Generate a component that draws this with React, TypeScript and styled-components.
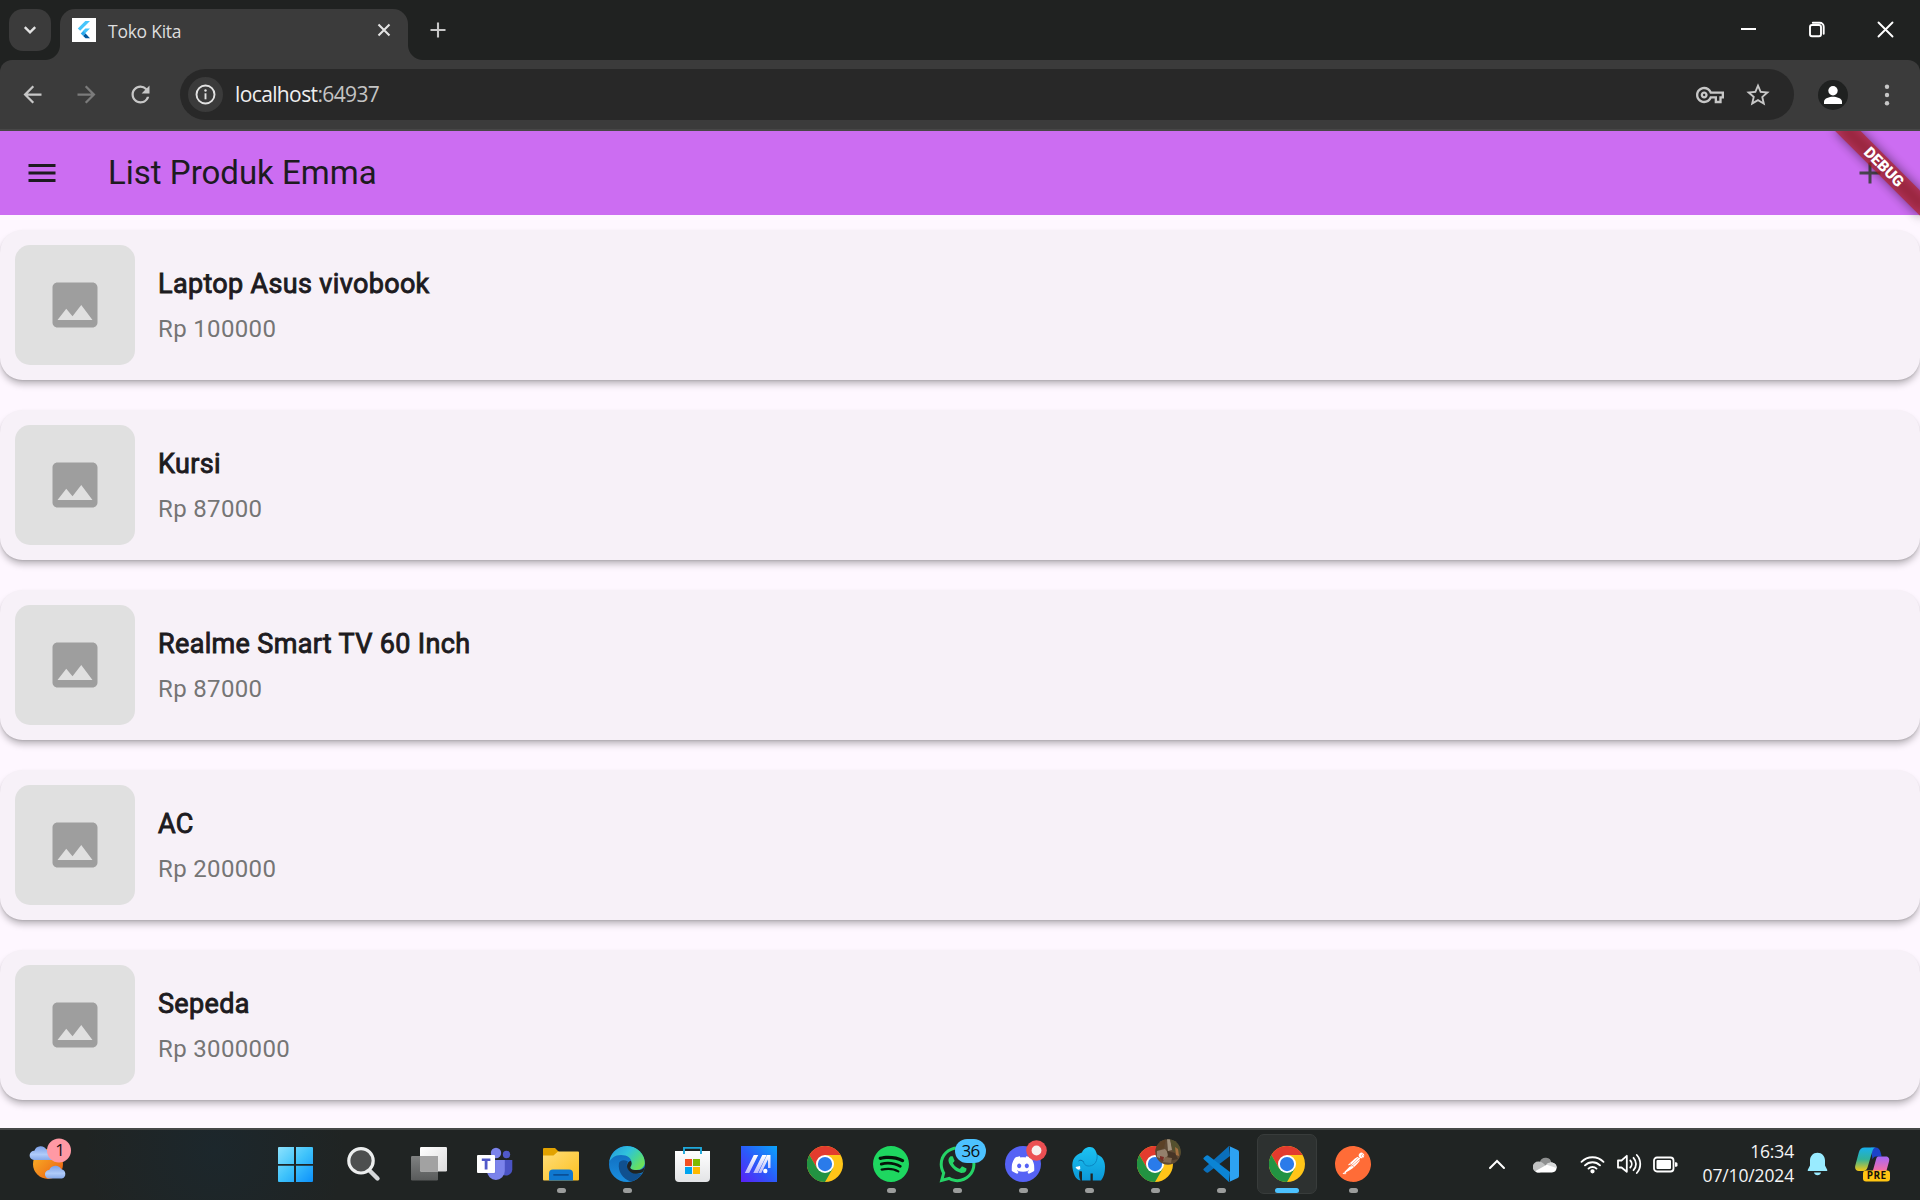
import React from "react";
import styled, { createGlobalStyle, css } from "styled-components";
import {
  MdArrowBack,
  MdArrowForward,
  MdRefresh,
  MdOutlineVpnKey,
  MdStarBorder,
  MdMenu,
  MdAdd,
  MdImage,
} from "react-icons/md";
import { SiSpotify, SiDiscord, SiPostman } from "react-icons/si";
import { FaWhatsapp } from "react-icons/fa";

const uiFont = '"Open Sans", "Noto Sans", sans-serif';

const GlobalStyle = createGlobalStyle`
  *, *::before, *::after { box-sizing: border-box; }
  html, body { margin: 0; padding: 0; background: #202221; overflow: hidden; }
  svg { display: block; flex: none; }
`;

const Screen = styled.div`
  width: 1920px;
  height: 1200px;
  display: flex;
  flex-direction: column;
  overflow: hidden;
  font-family: Roboto, sans-serif;
`;

/* ---------- Browser chrome ---------- */

const TabStrip = styled.header`
  flex: none;
  height: 60px;
  display: flex;
  align-items: flex-start;
  padding: 9px 0 0 9px;
  background: #202221;
`;

const TabSearchButton = styled.div`
  width: 42px;
  height: 42px;
  display: grid;
  place-items: center;
  border-radius: 14px;
  background: #3b3b3b;
`;

const Tab = styled.div`
  position: relative;
  width: 348px;
  height: 51px;
  margin-left: 9px;
  padding: 9px 0 0 12px;
  display: flex;
  align-items: flex-start;
  background: #3b3b3b;
  border-radius: 15px 15px 0 0;

  &::before,
  &::after {
    content: "";
    position: absolute;
    bottom: 0;
    width: 15px;
    height: 15px;
  }
  &::before {
    left: -15px;
    background: radial-gradient(circle at 0 0, transparent 14.5px, #3b3b3b 15.5px);
  }
  &::after {
    right: -15px;
    background: radial-gradient(circle at 100% 0, transparent 14.5px, #3b3b3b 15.5px);
  }
`;

const TabTitle = styled.span`
  flex: 1;
  margin-left: 12px;
  font: 400 17.5px/26px ${uiFont};
  letter-spacing: -0.25px;
  color: #dedede;
`;

const TabClose = styled.span`
  margin: 5px 17px 0 0;
`;

const NewTab = styled.div`
  margin: 13px 0 0 22px;
`;

const WindowButtons = styled.div`
  margin-left: auto;
  display: flex;
  height: 40px;
`;

const WindowButton = styled.div`
  width: 68.5px;
  display: flex;
  justify-content: center;
  padding-top: 12px;
`;

const ToolbarBack = styled.div`
  flex: none;
  background: #202221;
`;

const Toolbar = styled.div`
  height: 71px;
  display: flex;
  align-items: center;
  padding: 0 20px 0 19px;
  background: #3b3b3b;
  border-bottom: 2px solid #474747;
  border-radius: 12px 12px 0 0;
`;

const NavButton = styled.div<{ $dim?: boolean }>`
  width: 27px;
  margin-right: 27px;
  color: ${(p) => (p.$dim ? "#7b7b7b" : "#c7c7c7")};
`;

const AddressBar = styled.div`
  width: 1614px;
  height: 51px;
  margin-left: -1px;
  display: flex;
  align-items: center;
  padding: 0 22px 0 8px;
  border-radius: 26px;
  background: #282828;
  color: #c7c7c7;
`;

const SiteInfo = styled.div`
  width: 35px;
  height: 35px;
  display: grid;
  place-items: center;
  border-radius: 50%;
  background: #3b3b3b;
`;

const Url = styled.div`
  flex: 1;
  margin-left: 12px;
  padding-bottom: 1px;
  font: 400 21px/30px ${uiFont};
  letter-spacing: -0.62px;
  color: #c4c4c4;

  b {
    font-weight: 400;
    color: #efefef;
  }
`;

const AddressActions = styled.div`
  display: flex;
  align-items: center;
  gap: 20px;
`;

const Avatar = styled.div`
  width: 30px;
  height: 30px;
  margin-left: 24px;
  border-radius: 50%;
  background: #1f2120;
`;

const MoreMenu = styled.div`
  margin-left: auto;
  width: 26px;
  display: grid;
  place-items: center;
`;

/* ---------- Page ---------- */

const Page = styled.main`
  position: relative;
  flex: 1;
  display: flex;
  flex-direction: column;
  overflow: hidden;
  background: #fef7ff;
`;

const AppBar = styled.div`
  flex: none;
  height: 84px;
  display: flex;
  align-items: center;
  padding: 0 32px 0 24px;
  background: #cc6df2;
`;

const AppTitle = styled.h1`
  flex: 1;
  margin: 0 0 0 48px;
  font: 400 33px/42px Roboto, sans-serif;
  color: #1d1b20;
`;

const Ribbon = styled.div`
  position: absolute;
  top: 0;
  left: 100%;
  width: 120px;
  height: 18px;
  transform-origin: 0 0;
  transform: rotate(45deg) translate(-60px, 42px);

  &::before {
    content: "";
    position: absolute;
    inset: 0;
    background: rgba(0, 0, 0, 0.5);
    filter: blur(5.5px);
  }

  span {
    position: relative;
    display: block;
    background: rgba(183, 28, 28, 0.63);
    color: #fff;
    font: 900 15.3px/18px Roboto, sans-serif;
    text-align: center;
  }
`;

const ProductList = styled.ul`
  margin: 0;
  padding: 15px 0;
  list-style: none;
  display: flex;
  flex-direction: column;
  gap: 30px;
`;

const Card = styled.li`
  height: 150px;
  display: flex;
  align-items: center;
  padding: 15px;
  gap: 23px;
  border-radius: 22.5px;
  background: #f7f1f8;
  box-shadow: 0 5px 7px -1px rgba(0, 0, 0, 0.27), 0 1px 2px rgba(0, 0, 0, 0.1);
`;

const Thumb = styled.div`
  width: 120px;
  height: 120px;
  display: grid;
  place-items: center;
  border-radius: 15px;
  background: #e0e0e0;
  color: #9e9e9e;
`;

const ProductText = styled.div`
  padding-top: 2px;
`;

const ProductName = styled.div`
  font: 400 27px/36px Roboto, sans-serif;
  letter-spacing: 0.34px;
  -webkit-text-stroke: 0.9px #1d1b20;
  color: #1d1b20;
`;

const Price = styled.div`
  margin-top: 10px;
  font: 400 24px/34px Roboto, sans-serif;
  letter-spacing: 0.34px;
  color: #757575;
`;

/* ---------- Taskbar ---------- */

const Taskbar = styled.footer`
  flex: none;
  height: 72px;
  display: flex;
  align-items: stretch;
  border-top: 2px solid #474749;
  background: radial-gradient(circle at 215px 20px, #1c272c 0, rgba(32, 36, 35, 0) 130px), #202423;
`;

const Widgets = styled.div`
  width: 264px;
  padding: 7px 0 0 29px;
`;

const Slot = styled.div<{ $active?: boolean }>`
  position: relative;
  width: 66px;
  display: flex;
  flex-direction: column;
  align-items: center;
  padding-top: 16px;

  ${(p) =>
    p.$active &&
    css`
      &::before {
        content: "";
        position: absolute;
        left: 3px;
        top: 4px;
        width: 60px;
        height: 60px;
        border: 1.5px solid #383c3b;
        border-radius: 7px;
        background: #2d3130;
      }
    `}
`;

const IconBox = styled.div`
  position: relative;
  width: 36px;
  height: 36px;
  display: flex;
  align-items: center;
  justify-content: center;
`;

const RunMark = styled.i<{ $active?: boolean }>`
  position: relative;
  width: ${(p) => (p.$active ? 24 : 9)}px;
  height: 5px;
  margin-top: 6px;
  border-radius: 3px;
  background: ${(p) => (p.$active ? "#4cc2ff" : "#9b9d9c")};
`;

const CountBadge = styled.span`
  position: absolute;
  left: 16px;
  top: -7px;
  width: 31px;
  height: 24px;
  border-radius: 12px;
  background: #4cc2ff;
  color: #0c1114;
  font: 400 17px/24px ${uiFont};
  letter-spacing: -0.6px;
  text-align: center;
`;

const Overlay = styled.span`
  position: absolute;
  left: 18px;
  top: -7px;
`;

const Tray = styled.div`
  margin-left: auto;
  display: flex;
  align-items: center;
  padding: 0 30px 2px 0;
`;

const TrayItem = styled.div<{ $gap: number }>`
  margin-left: ${(p) => p.$gap}px;
`;

const Clock = styled.div`
  width: 112px;
  margin-left: 4px;
  padding-bottom: 3px;
  font: 400 17.5px/24px ${uiFont};
  letter-spacing: -0.15px;
  text-align: right;
  color: #f4f5f5;
  white-space: nowrap;
`;

/* ---------- Drawings ---------- */

const FlutterIcon = () => (
  <svg width="24" height="24" viewBox="0 0 24 24">
    <rect width="24" height="24" fill="#fff" />
    <path d="M13.3 3H18L8.2 12.8 5.8 10.5z" fill="#47c5fb" />
    <path d="M13.3 10.6H18l-5 5-2.4-2.4z" fill="#47c5fb" />
    <path d="M8.7 15.5l2.5-2.4 2.4 2.4-2.4 2.4z" fill="#2aa9ee" />
    <path d="M11.2 17.9l2.4-2.4L18 20.3h-4.5z" fill="#00569e" />
  </svg>
);

const WeatherIcon = () => (
  <svg width="44" height="46" viewBox="0 0 44 46">
    <defs>
      <linearGradient id="sun" x1="0" y1="0" x2="1" y2="1">
        <stop offset="0" stopColor="#fbb929" />
        <stop offset="1" stopColor="#ea5a10" />
      </linearGradient>
      <linearGradient id="cloudBlue" x1="0" y1="0" x2="0" y2="1">
        <stop offset="0" stopColor="#7b9fe6" />
        <stop offset=".6" stopColor="#afcbfa" />
        <stop offset="1" stopColor="#86a9ea" />
      </linearGradient>
    </defs>
    <circle cx="19" cy="27" r="15" fill="url(#sun)" />
    <path d="M5 23a4.6 4.6 0 0 1 .4-9.200A6.500 6.500 0 0 1 17.500 13 5 5 0 0 1 23 23z" fill="url(#cloudBlue)" />
    <path d="M20 41.500a4.200 4.200 0 0 1 .3-8.400 6.500 6.500 0 0 1 12-.8 4.700 4.700 0 0 1 .5 9.200z" fill="url(#cloudBlue)" />
    <circle cx="30" cy="13.500" r="12" fill="#ff99a4" />
    <text x="31" y="19" fontSize="17" textAnchor="middle" fill="#1b1012" fontFamily="Open Sans, sans-serif">1</text>
  </svg>
);

const StartIcon = () => (
  <svg width="36" height="36" viewBox="3 0 36 36" overflow="visible">
    <defs>
      <linearGradient id="win" gradientUnits="userSpaceOnUse" x1="0" y1="0" x2="36" y2="36">
        <stop offset="0" stopColor="#8fe3fd" />
        <stop offset=".5" stopColor="#3fc3fb" />
        <stop offset="1" stopColor="#0a8ffb" />
      </linearGradient>
    </defs>
    <g fill="url(#win)" transform="translate(1 1)">
      <path d="M2 0h15v17H1V1a1 1 0 0 1 1-1zM19 0h16a1 1 0 0 1 1 1V17H19zM1 18.800h16V35H2a1 1 0 0 1-1-1zM19 18.800h17v15.200a1 1 0 0 1-1 1H19z" />
    </g>
  </svg>
);

const SearchIcon = () => (
  <svg width="36" height="36" viewBox="0 0 36 36">
    <path d="M25 25l7.500 7.500" stroke="#d5d8da" strokeWidth="4.400" strokeLinecap="round" />
    <circle cx="16" cy="14.800" r="12.200" fill="#4d4f4f" stroke="#eceeee" strokeWidth="3.200" />
  </svg>
);

const TaskViewIcon = () => (
  <svg width="36" height="36" viewBox="0 0 36 36">
    <defs>
      <linearGradient id="tvLight" x1="0" y1="0" x2="1" y2="1">
        <stop offset="0" stopColor="#fff" />
        <stop offset="1" stopColor="#dcdcdc" />
      </linearGradient>
      <linearGradient id="tvDark" x1="0" y1="0" x2="0" y2="1">
        <stop offset="0" stopColor="#7f8181" />
        <stop offset="1" stopColor="#595b5b" />
      </linearGradient>
    </defs>
    <rect x="0" y="10" width="27" height="24.500" rx="1.200" fill="url(#tvDark)" />
    <rect x="9" y="1" width="27" height="24.500" rx="1.200" fill="url(#tvLight)" />
    <path d="M9 10h18v15.500H10.200A1.200 1.200 0 0 1 9 24.300z" fill="#a2a2a2" />
  </svg>
);

const TeamsIcon = () => (
  <svg width="36" height="36" viewBox="0 0 36 36">
    <circle cx="29.500" cy="8.500" r="3.700" fill="#5059c9" />
    <path d="M25 14h10.300v9.500a6.300 6.300 0 0 1-10.300 4.500z" fill="#4a53c4" />
    <circle cx="19" cy="7" r="5.200" fill="#7b83eb" />
    <path d="M10 14h17.800v11a8.900 8.900 0 0 1-17.800 0z" fill="#7b83eb" />
    <path d="M11 27.500h7.500V12H11z" fill="#4f56b5" opacity=".25" />
    <rect x="0" y="9" width="18" height="18" rx="1" fill="#fff" />
    <path d="M4.800 12.500h8.600v2.500h-2.900v8.500H7.700V15H4.800z" fill="#5059c9" />
  </svg>
);

const FolderIcon = () => (
  <svg width="36" height="36" viewBox="0 0 36 36">
    <defs>
      <linearGradient id="folder" x1="0" y1="0" x2="1" y2="1">
        <stop offset="0" stopColor="#ffdd78" />
        <stop offset="1" stopColor="#fcc020" />
      </linearGradient>
    </defs>
    <path d="M1 2h11l3.500 3.500V12H0V3a1 1 0 0 1 1-1z" fill="#e2a200" />
    <path d="M0 9.500h10.500L15 5.500h20a1 1 0 0 1 1 1v27a1 1 0 0 1-1 1H1a1 1 0 0 1-1-1z" fill="url(#folder)" />
    <path d="M6 34.500V27.500a4 4 0 0 1 4-4h16a4 4 0 0 1 4 4v7z" fill="#0f78d0" />
    <path d="M11 28.800h14" stroke="#0a4f96" strokeWidth="1.800" strokeLinecap="round" />
  </svg>
);

const EdgeIcon = () => (
  <svg width="36" height="36" viewBox="0 0 36 36">
    <defs>
      <linearGradient id="edgeTop" x1="0" y1="0" x2="1" y2=".6">
        <stop offset="0" stopColor="#2496dc" />
        <stop offset=".5" stopColor="#30c2dc" />
        <stop offset=".75" stopColor="#45d49b" />
        <stop offset="1" stopColor="#6be05c" />
      </linearGradient>
      <linearGradient id="edgeLeft" x1="0" y1="0" x2="0" y2="1">
        <stop offset="0" stopColor="#0f66b8" />
        <stop offset="1" stopColor="#1a8fe0" />
      </linearGradient>
      <clipPath id="edgeDisc">
        <circle cx="18" cy="18" r="18" />
      </clipPath>
    </defs>
    <g clipPath="url(#edgeDisc)">
      <rect width="36" height="36" fill="url(#edgeLeft)" />
      <path d="M10 17c-1.500 9 4 15.500 11.500 18.600L36 36V26.500C30 29.500 20 27.500 18 20.500c-.5-2 .2-4 1-5C15 13.500 11.500 14 10 17z" fill="#10508f" />
      <path d="M37 18c-1.500 4.500-5 6.100-9 6-3.500 0-6.500-1-6.500-2.500 0-1.200 1.300-1.800 1.300-4 0-1-.3-2-1-2.800-3 1-4.300 4-3.600 7C20 27.500 28.500 29.500 34 26l3-1z" fill="#202423" />
      <path d="M0 17C1 7 8.500 0 18 0c10 0 18 7.500 18 15.500 0 5.500-4 8.500-8.500 8.500-4 0-6.500-1.200-6-2.800.3-1 1.300-1.700 1.300-4C22.800 12.500 18.500 9 12 9 6 9 1.500 12.500 0 17z" fill="url(#edgeTop)" />
    </g>
  </svg>
);

const StoreIcon = () => (
  <svg width="36" height="36" viewBox="0 0 36 36">
    <defs>
      <linearGradient id="bag" x1="0" y1="0" x2="0" y2="1">
        <stop offset="0" stopColor="#fff" />
        <stop offset="1" stopColor="#e3e4e6" />
      </linearGradient>
    </defs>
    <path d="M0 5h35v27a4 4 0 0 1-4 4H4a4 4 0 0 1-4-4z" fill="url(#bag)" />
    <path d="M9 8V1.900h17V8" fill="none" stroke="#1fa9dc" strokeWidth="1.900" />
    <path d="M10 13h7v7h-7z" fill="#f25022" />
    <path d="M18 13h7v7h-7z" fill="#7fba00" />
    <path d="M10 21h7v7h-7z" fill="#00a4ef" />
    <path d="M18 21h7v7h-7z" fill="#ffb900" />
  </svg>
);

const MyAsusIcon = () => (
  <svg width="36" height="36" viewBox="0 0 36 36">
    <defs>
      <linearGradient id="asus" x1="0" y1="1" x2="1" y2="0">
        <stop offset="0" stopColor="#5a20f5" />
        <stop offset=".5" stopColor="#2a5cfa" />
        <stop offset="1" stopColor="#0aa5fa" />
      </linearGradient>
      <linearGradient id="stroke" x1="0" y1="0" x2="0" y2="1">
        <stop offset="0" stopColor="#fff" />
        <stop offset="1" stopColor="#b9b8fb" />
      </linearGradient>
    </defs>
    <rect width="36" height="36" fill="url(#asus)" />
    <path d="M12.800 9h4.400L8.200 27H3.800zM21.300 9h4.400L16.700 27h-4.400z" fill="url(#stroke)" />
    <path d="M26 9h3.500v13h-2.500v-8.500L20.300 27h-3z" fill="url(#stroke)" />
    <circle cx="24.300" cy="25" r="2.200" fill="#fff" />
  </svg>
);

const ChromeIcon = () => (
  <svg width="36" height="36" viewBox="0 0 48 48">
    <circle cx="24" cy="24" r="24" fill="#ffc518" />
    <path d="M24 12h20.800A24 24 0 0 0 3.200 12L13.600 30z" fill="#e33b2e" />
    <path d="M34.400 30 24 48A24 24 0 0 1 3.200 12l10.400 18z" fill="#229342" />
    <circle cx="24" cy="24" r="12" fill="#fff" />
    <circle cx="24" cy="24" r="9.500" fill="#2a7bea" />
  </svg>
);

const SpotifyIcon = () => (
  <svg width="36" height="36" viewBox="0 0 36 36">
    <circle cx="18" cy="18" r="16" fill="#06140a" />
    <SiSpotify x="0" y="0" size={36} color="#1ed760" />
  </svg>
);

const DiscordIcon = () => (
  <svg width="36" height="36" viewBox="0 0 36 36">
    <circle cx="18" cy="18" r="18" fill="#5562f5" />
    <SiDiscord x="6.500" y="7.500" size={23} color="#fff" />
  </svg>
);

const RecordDot = () => (
  <svg width="21" height="21" viewBox="0 0 21 21">
    <circle cx="10.500" cy="10.500" r="10.300" fill="#eb4f52" />
    <circle cx="10.500" cy="10.500" r="4.900" fill="#f6efef" />
  </svg>
);

const ElephantIcon = () => (
  <svg width="36" height="36" viewBox="0 0 36 36">
    <defs>
      <linearGradient id="eleph" x1="0" y1="0" x2="0" y2="1">
        <stop offset="0" stopColor="#1cc3f2" />
        <stop offset="1" stopColor="#0b98d8" />
      </linearGradient>
    </defs>
    <path d="M1.500 22C.5 14 4 8.500 11 6.500 12.500 2.500 16 1 19 1c4 0 6 3.500 7 7.500 5 1.500 8 6 8 12 0 7-1.500 11-4 14h-8.200v-7h-2.300v7H11V25.500L8.500 25C7.800 28.500 8 31.500 9.500 34.500 4.500 33.500 2.500 28 1.500 22z" fill="url(#eleph)" />
    <path d="M26 8.500c.8 6-2 11-7.500 11.500-4 .3-6-2-6-5" fill="none" stroke="#0a87c2" strokeWidth="1" />
    <path d="M7.500 15c1.500-1.200 3.500-1 4.500.5" fill="none" stroke="#0b6fa4" strokeWidth="1" />
    <path d="M4.500 21l4.500-1 .3 3c-1.500 1.500-3.500.5-4.800-2z" fill="#fff" />
  </svg>
);

const ProfilePhoto = () => (
  <svg width="26" height="26" viewBox="0 0 26 26">
    <defs>
      <clipPath id="photoClip">
        <circle cx="13" cy="13" r="12.700" />
      </clipPath>
      <filter id="photoSoft">
        <feGaussianBlur stdDeviation="0.7" />
      </filter>
    </defs>
    <g clipPath="url(#photoClip)">
      <rect width="26" height="26" fill="#5f4a34" />
      <g filter="url(#photoSoft)">
        <path d="M0 0h11l-2 9-9 4z" fill="#5c4226" />
        <path d="M12 0h3l2 11-4 1z" fill="#a3947f" />
        <path d="M15 0h11v16l-8-4z" fill="#55512f" />
        <path d="M2 12l8-2 4 5-5 6-7-3z" fill="#94806c" />
        <path d="M12 12l8 2 3 6-9 2z" fill="#463626" />
        <path d="M10 18l7 1-1 5-8-1z" fill="#80674f" />
        <path d="M20 8l3 2 1 7-3-1z" fill="#a5713f" />
        <path d="M5 17l4 1-1 4-3-2z" fill="#7d2e27" />
      </g>
    </g>
  </svg>
);

const CodeIcon = () => (
  <svg width="36" height="36" viewBox="0 0 36 36">
    <path d="M26 0 1 22.500a1.300 1.300 0 0 0 0 2l2 1.800a1.800 1.800 0 0 0 2.200.1L27 10z" fill="#0a6fbb" />
    <path d="M26 36 1 13.500a1.300 1.300 0 0 1 0-2l2-1.800a1.800 1.800 0 0 1 2.200-.1L27 26z" fill="#0b84d4" />
    <path d="M26 0l8.700 4A2.200 2.200 0 0 1 36 6v24a2.200 2.200 0 0 1-1.300 2L26 36c.8-.5 1-1 1-2V2c0-1-.2-1.500-1-2z" fill="#2da2f2" />
  </svg>
);

const PostmanIcon = () => (
  <svg width="36" height="36" viewBox="0 0 36 36">
    <circle cx="18" cy="18" r="17" fill="#fff" />
    <SiPostman x="0" y="0" size={36} color="#ff6c37" />
  </svg>
);

const CloudIcon = () => (
  <svg width="24" height="17" viewBox="0 0 24 17">
    <path d="M7 5.500a6 6 0 0 1 11.500 1.500L12 11z" fill="#8e9090" />
    <path d="M5 16.500a5.400 5.400 0 0 1 .5-11c3 0 6 2 8 5.500L7 16.500z" fill="#c0c2c2" />
    <path d="M2.500 15 15 8c1.500-1.500 3.500-2 5-1.300A5 5 0 0 1 19 16.500H5c-1 0-2-.5-2.500-1.500z" fill="#fff" />
    <path d="M13 8.500c2-2.500 7-3 9.500.5.800 1.200 1 2 1 3z" fill="#d8dada" />
  </svg>
);

const WifiIcon = () => (
  <svg width="25" height="20" viewBox="0 0 25 20" fill="none" stroke="#fff" strokeWidth="1.900" strokeLinecap="round">
    <path d="M1.500 7.800a15.500 15.500 0 0 1 22 0M5 11.300a10.600 10.600 0 0 1 15 0M8.500 14.600a5.700 5.700 0 0 1 8 0" />
    <circle cx="12.500" cy="17.300" r="1.200" fill="#fff" />
  </svg>
);

const SpeakerIcon = () => (
  <svg width="25" height="22" viewBox="0 0 25 22" fill="none" stroke="#fff" strokeWidth="1.800" strokeLinecap="round" strokeLinejoin="round">
    <path d="M1 7.500h3.500L9.800 2.800v16L4.500 14.500H1z" />
    <path d="M13.300 7.500a5 5 0 0 1 0 7M16.500 4.800a9 9 0 0 1 0 12.400M19.800 2a13.500 13.500 0 0 1 0 18" />
  </svg>
);

const BatteryIcon = () => (
  <svg width="25" height="17" viewBox="0 0 25 17">
    <rect x="1" y="1.500" width="19.500" height="14" rx="3" fill="none" stroke="#fff" strokeWidth="1.800" />
    <rect x="3.500" y="4" width="14.500" height="9" rx="1" fill="#fff" />
    <path d="M22 6.200h1a1.500 1.500 0 0 1 1.500 1.500v1.600A1.500 1.500 0 0 1 23 10.800h-1z" fill="#fff" />
  </svg>
);

const BellIcon = () => (
  <svg width="21" height="24" viewBox="0 0 21 24">
    <path d="M10.500.8c4.500 0 7.500 3.500 7.500 7.700v5l2.200 4.200c.3.700 0 1.300-.8 1.300H1.600c-.8 0-1.100-.6-.8-1.300L3 13.500v-5C3 4.300 6 .8 10.500.8z" fill="#99ebff" />
    <path d="M7 20.500h7a3.600 3.600 0 0 1-7 0z" fill="#99ebff" />
  </svg>
);

const CopilotIcon = () => (
  <svg width="35" height="35" viewBox="0 0 35 35">
    <defs>
      <linearGradient id="copA" x1="0" y1="0" x2="0" y2="1">
        <stop offset="0" stopColor="#18b0ee" />
        <stop offset=".5" stopColor="#31b29a" />
        <stop offset="1" stopColor="#f5c714" />
      </linearGradient>
      <linearGradient id="copB" x1="0" y1="0" x2="0" y2="1">
        <stop offset="0" stopColor="#a668f8" />
        <stop offset="1" stopColor="#ff6f9a" />
      </linearGradient>
    </defs>
    <path d="M16 .5h4.500C23.500.5 24.500 2 25.500 5l1.200 4.500H21c-2 0-3 1.500-3.500 3z" fill="#1c43c8" />
    <path d="M9.500.5H21c-2 0-3 1.500-3.700 4l-4.800 16c-.7 2.300-2 3.500-4.500 3.500H4c-3 0-4.500-2-3.700-5.500l3.500-13C4.800 2 6.500.5 9.500.5z" fill="url(#copA)" />
    <path d="M23 9.500h7.500c3 0 4.300 2 3.500 5l-3 11H15c2-.3 2.800-1.500 3.500-4l2.500-9c.4-1.500 1-2.700 2-3z" fill="url(#copB)" />
    <rect x="8" y="23.500" width="27" height="11" rx="3" fill="#ffc512" />
    <text x="21.700" y="32.400" fontSize="10" fontWeight="700" letterSpacing=".4" textAnchor="middle" fill="#17120a" fontFamily="Open Sans, sans-serif">PRE</text>
  </svg>
);

/* ---------- Data ---------- */

const products = [
  { name: "Laptop Asus vivobook", price: 100000 },
  { name: "Kursi", price: 87000 },
  { name: "Realme Smart TV 60 Inch", price: 87000 },
  { name: "AC", price: 200000 },
  { name: "Sepeda", price: 3000000 },
];

type AppEntry = {
  id: string;
  icon: React.ReactNode;
  running?: boolean;
  active?: boolean;
};

const RecordOverlay = styled(Overlay)`
  left: 21px;
  top: -6px;
`;

const apps: AppEntry[] = [
  { id: "start", icon: <StartIcon /> },
  { id: "search", icon: <SearchIcon /> },
  { id: "taskview", icon: <TaskViewIcon /> },
  { id: "teams", icon: <TeamsIcon /> },
  { id: "explorer", icon: <FolderIcon />, running: true },
  { id: "edge", icon: <EdgeIcon />, running: true },
  { id: "store", icon: <StoreIcon /> },
  { id: "myasus", icon: <MyAsusIcon /> },
  { id: "chrome", icon: <ChromeIcon /> },
  { id: "spotify", icon: <SpotifyIcon />, running: true },
  {
    id: "whatsapp",
    icon: (
      <>
        <FaWhatsapp size={41} color="#25d366" />
        <CountBadge>36</CountBadge>
      </>
    ),
    running: true,
  },
  {
    id: "discord",
    icon: (
      <>
        <DiscordIcon />
        <RecordOverlay>
          <RecordDot />
        </RecordOverlay>
      </>
    ),
    running: true,
  },
  { id: "elephant", icon: <ElephantIcon />, running: true },
  {
    id: "chrome-profile",
    icon: (
      <>
        <ChromeIcon />
        <Overlay>
          <ProfilePhoto />
        </Overlay>
      </>
    ),
    running: true,
  },
  { id: "vscode", icon: <CodeIcon />, running: true },
  { id: "chrome-active", icon: <ChromeIcon />, running: true, active: true },
  { id: "postman", icon: <PostmanIcon />, running: true },
];

export default function App() {
  return (
    <Screen>
      <GlobalStyle />
      <TabStrip>
        <TabSearchButton>
          <svg width="14" height="10" viewBox="0 0 14 10">
            <path d="M1.800 2.200 7 7.400l5.200-5.200" fill="none" stroke="#e3e3e3" strokeWidth="2.400" />
          </svg>
        </TabSearchButton>
        <Tab>
          <FlutterIcon />
          <TabTitle>Toko Kita</TabTitle>
          <TabClose>
            <svg width="14" height="14" viewBox="0 0 14 14">
              <path d="M1.500 1.500l11 11M12.500 1.500l-11 11" stroke="#e3e3e3" strokeWidth="2.100" />
            </svg>
          </TabClose>
        </Tab>
        <NewTab>
          <svg width="16" height="16" viewBox="0 0 16 16">
            <path d="M8 .5v15M.5 8h15" stroke="#c7c7c7" strokeWidth="2.100" />
          </svg>
        </NewTab>
        <WindowButtons>
          <WindowButton>
            <svg width="16" height="17" viewBox="0 0 16 17">
              <path d="M0 8h15" stroke="#fff" strokeWidth="2" />
            </svg>
          </WindowButton>
          <WindowButton>
            <svg width="17" height="17" viewBox="1 0 17 17" fill="none" stroke="#fff" strokeWidth="1.900">
              <rect x="2" y="4" width="11" height="11.200" rx="2" />
              <path d="M4.800 1.800h6.900a4 4 0 0 1 4 4v7" strokeLinecap="round" />
            </svg>
          </WindowButton>
          <WindowButton>
            <svg width="17" height="17" viewBox="0 0 17 17">
              <path d="M1.500 1.500l14 14M15.500 1.500l-14 14" stroke="#fff" strokeWidth="1.900" strokeLinecap="round" />
            </svg>
          </WindowButton>
        </WindowButtons>
      </TabStrip>

      <ToolbarBack>
        <Toolbar>
          <NavButton>
            <MdArrowBack size={27} />
          </NavButton>
          <NavButton $dim>
            <MdArrowForward size={27} />
          </NavButton>
          <NavButton>
            <MdRefresh size={27} />
          </NavButton>
          <AddressBar>
            <SiteInfo>
              <svg width="21" height="21" viewBox="0 0 21 21">
                <circle cx="10.500" cy="10.500" r="9" fill="none" stroke="#e3e3e3" strokeWidth="1.900" />
                <path d="M10.500 9.300v6" stroke="#e3e3e3" strokeWidth="1.900" />
                <circle cx="10.500" cy="6.500" r="1.200" fill="#e3e3e3" />
              </svg>
            </SiteInfo>
            <Url>
              <b>localhost</b>:64937
            </Url>
            <AddressActions>
              <MdOutlineVpnKey size={28} />
              <MdStarBorder size={28} />
            </AddressActions>
          </AddressBar>
          <Avatar>
            <svg width="30" height="30" viewBox="0 0 30 30">
              <circle cx="15" cy="10.700" r="4.700" fill="#fff" />
              <path d="M6 24v-2.200c0-3.600 5.500-5 9-5s9 1.400 9 5V24z" fill="#fff" />
            </svg>
          </Avatar>
          <MoreMenu>
            <svg width="6" height="22" viewBox="0 0 6 22" fill="#c7c7c7">
              <circle cx="3" cy="2.700" r="2.200" />
              <circle cx="3" cy="11" r="2.200" />
              <circle cx="3" cy="19.300" r="2.200" />
            </svg>
          </MoreMenu>
        </Toolbar>
      </ToolbarBack>

      <Page>
        <AppBar>
          <MdMenu size={36} color="#1d1b20" />
          <AppTitle>List Produk Emma</AppTitle>
          <MdAdd size={36} color="#49454f" />
        </AppBar>
        <ProductList>
          {products.map((p) => (
            <Card key={p.name}>
              <Thumb>
                <MdImage size={60} />
              </Thumb>
              <ProductText>
                <ProductName>{p.name}</ProductName>
                <Price>Rp {p.price}</Price>
              </ProductText>
            </Card>
          ))}
        </ProductList>
        <Ribbon>
          <span>DEBUG</span>
        </Ribbon>
      </Page>

      <Taskbar>
        <Widgets>
          <WeatherIcon />
        </Widgets>
        {apps.map((a) => (
          <Slot key={a.id} $active={a.active}>
            <IconBox>{a.icon}</IconBox>
            {a.running && <RunMark $active={a.active} />}
          </Slot>
        ))}
        <Tray>
          <svg width="18" height="12" viewBox="0 0 18 12">
            <path d="M2 10l7-7 7 7" fill="none" stroke="#fff" strokeWidth="2" strokeLinecap="round" />
          </svg>
          <TrayItem $gap={27}>
            <CloudIcon />
          </TrayItem>
          <TrayItem $gap={23}>
            <WifiIcon />
          </TrayItem>
          <TrayItem $gap={12}>
            <SpeakerIcon />
          </TrayItem>
          <TrayItem $gap={11}>
            <BatteryIcon />
          </TrayItem>
          <Clock>
            16:34
            <br />
            07/10/2024
          </Clock>
          <TrayItem $gap={13}>
            <BellIcon />
          </TrayItem>
          <TrayItem $gap={27}>
            <CopilotIcon />
          </TrayItem>
        </Tray>
      </Taskbar>
    </Screen>
  );
}
